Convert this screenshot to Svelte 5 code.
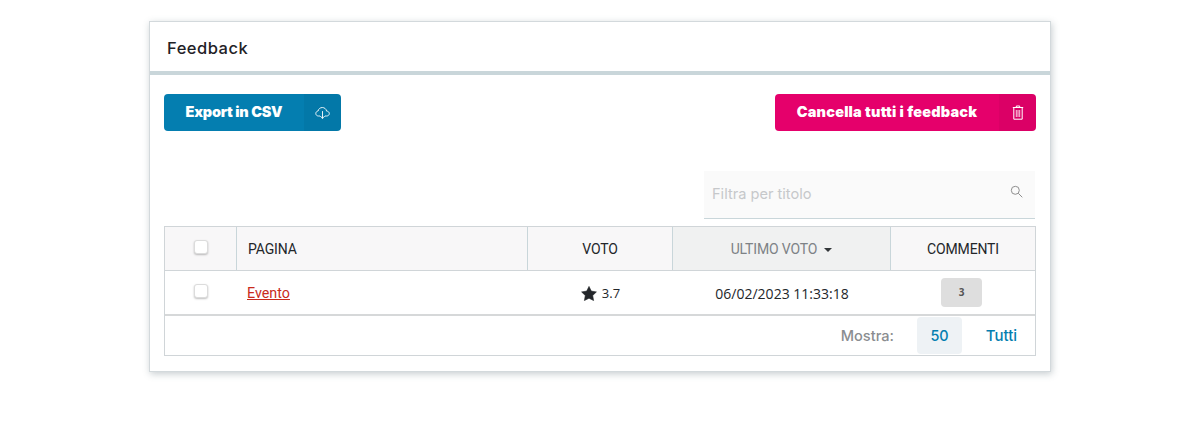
<script>
  const columns = [
    { label: 'PAGINA', cls: 'pagina' },
    { label: 'VOTO', cls: 'voto' }
  ];
</script>

<div class="page">
  <section class="card">
    <header class="card-head"><h2>Feedback</h2></header>
    <div class="card-body">
      <div class="actions">
        <button class="btn blue">
          <span class="btn-label">Export in CSV</span>
          <span class="btn-icon">
            <svg width="15" height="13" viewBox="0 0 15 13" fill="none" stroke="#fff" stroke-width="0.9" stroke-linecap="round" stroke-linejoin="round">
              <path d="M4.6 10H3.4C1.9 10 .8 8.9.8 7.5c0-1.300 1-2.400 2.300-2.500C3.400 3 5.200 1.500 7.300 1.500c2.200 0 4 1.600 4.300 3.600 1.500 0 2.700 1.100 2.700 2.500S13.100 10 11.700 10h-1.300"/>
              <path d="M7.500 5.500v6.800M5.500 10.300l2 2 2-2"/>
            </svg>
          </span>
        </button>
        <button class="btn pink">
          <span class="btn-label wide">Cancella tutti i feedback</span>
          <span class="btn-icon">
            <svg width="12" height="15" viewBox="0 0 12 15" fill="none" stroke="#fff" stroke-width="1" stroke-linejoin="round">
              <path d="M.8 2.500h10.400M4.300 2.500V1h3.400v1.500M1.800 2.500v11.700h8.400V2.500"/>
              <path d="M4.300 5v7M6 5v7M7.700 5v7" stroke-width="0.8"/>
            </svg>
          </span>
        </button>
      </div>

      <div class="filter-row">
        <div class="filter">
          <span class="placeholder">Filtra per titolo</span>
          <svg width="13" height="13" viewBox="0 0 13 13" fill="none" stroke="#8e8e8e" stroke-width="1">
            <circle cx="5.300" cy="5.300" r="4"/>
            <path d="M8.300 8.300l4 4"/>
          </svg>
        </div>
      </div>

      <div class="table">
        <div class="row head">
          <div class="cell check"><span class="box"></span></div>
          {#each columns as c}
            <div class="cell {c.cls}">{c.label}</div>
          {/each}
          <div class="cell ultimo sorted">ULTIMO VOTO <span class="caret"></span></div>
          <div class="cell commenti">COMMENTI</div>
        </div>
        <div class="row data">
          <div class="cell check"><span class="box"></span></div>
          <div class="cell pagina"><a href="#evento">Evento</a></div>
          <div class="cell voto">
            <svg class="star" width="16" height="15" viewBox="0 0 16 15" fill="#23262a">
              <path d="M8 .4l2.300 4.700 5.100.8-3.700 3.600.9 5.100L8 12.200l-4.600 2.400.9-5.100L.6 5.900l5.100-.8z" stroke="#23262a" stroke-width="0.6" stroke-linejoin="round"/>
            </svg>
            <span>3.7</span>
          </div>
          <div class="cell ultimo">06/02/2023 11:33:18</div>
          <div class="cell commenti"><span class="badge">3</span></div>
        </div>
        <div class="foot">
          <span class="mostra">Mostra:</span>
          <span class="page-opt active">50</span>
          <span class="page-opt tutti">Tutti</span>
        </div>
      </div>
    </div>
  </section>
</div>

<style>
  :global(body) {
    margin: 0;
    background: #fff;
  }

  .page {
    width: 1191px;
    height: 428px;
    padding: 21px 0 0 149px;
    box-sizing: border-box;
  }

  .card {
    width: 902px;
    height: 351px;
    box-sizing: border-box;
    border: 1px solid #d3d9dc;
    background: #fff;
    box-shadow: 1px 2px 7px rgba(80, 100, 110, 0.32);
  }

  .card-head {
    border-bottom: 4px solid #c9d6da;
    display: flex;
    align-items: center;
    padding: 2px 17px 0;
    height: 47px;
  }

  h2 {
    margin: 0;
    font: 500 16.500px "Inter", sans-serif;
    letter-spacing: 0.5px;
    color: #1f2226;
  }

  .card-body {
    padding: 19px 14px 0;
  }

  .actions {
    display: flex;
    justify-content: space-between;
    width: 872px;
  }

  .btn {
    display: flex;
    height: 37px;
    padding: 0;
    border: 0;
    border-radius: 4px;
    color: #fff;
    overflow: hidden;
    font: 900 14.500px "Inter", sans-serif;
    letter-spacing: -0.25px;
  }

  .blue {
    width: 177px;
    background: #047eb0;
  }

  .pink {
    width: 261px;
    background: #e5006b;
  }

  .btn-label {
    flex: 1;
    align-self: center;
    text-align: center;
    padding-bottom: 2px;
  }

  .wide {
    letter-spacing: 0.2px;
  }

  .btn-icon {
    width: 37px;
    display: flex;
    align-items: center;
    justify-content: center;
    background: rgba(0, 0, 0, 0.045);
  }

  .filter-row {
    display: flex;
    justify-content: flex-end;
    width: 871px;
    margin-top: 40px;
  }

  .filter {
    width: 331px;
    height: 48px;
    box-sizing: border-box;
    padding: 0 12px 2px 8px;
    background: #fafafa;
    border-bottom: 1px solid #c9d6da;
    display: flex;
    align-items: center;
    justify-content: space-between;
  }

  .filter svg {
    margin-bottom: 4px;
  }

  .placeholder {
    font: 400 14.600px "Inter", sans-serif;
    color: #c6c8ca;
  }

  .table {
    width: 872px;
    box-sizing: border-box;
    margin-top: 7px;
    border: 1px solid #d0d5d8;
    font: 400 14px "Open Sans", sans-serif;
    color: #23262a;
  }

  .row {
    display: grid;
    grid-template-columns: 71px 291px 145px 218px 1fr;
  }

  .cell {
    display: flex;
    align-items: center;
    justify-content: center;
    box-sizing: border-box;
  }

  .head {
    height: 43px;
    background: #f8f7f8;
    border-bottom: 1px solid #d0d5d8;
    font: 400 14px "Roboto", sans-serif;
    letter-spacing: -0.15px;
    color: #23262a;
  }

  .head .cell + .cell {
    border-left: 1px solid #c9d6da;
  }

  .head .sorted {
    background: #f0f1f1;
    color: #7d8286;
  }

  .caret {
    width: 0;
    height: 0;
    margin: 2px 0 0 7px;
    border: 4px solid transparent;
    border-top: 4px solid #33373a;
    border-bottom: 0;
  }

  .pagina {
    justify-content: flex-start;
    padding-left: 11px;
  }

  .box {
    width: 12px;
    height: 12px;
    border: 1px solid #dcdcdc;
    border-radius: 3px;
    background: #fff;
    box-shadow: 0 1px 2px rgba(0, 0, 0, 0.25);
    margin: -4px 0 0 0;
  }

  .data {
    height: 43px;
    border-bottom: 2px solid #d6d8d9;
    font-size: 14px;
  }

  .data .cell {
    padding-top: 1px;
  }

  .data .ultimo {
    padding-left: 2px;
  }

  .voto span {
    font-size: 13px;
  }

  a {
    color: #c92a1b;
    font-family: "Roboto", sans-serif;
    font-size: 14.300px;
  }

  .star {
    margin: 0 5px 0 2px;
  }

  .badge {
    width: 41px;
    height: 29px;
    display: flex;
    align-items: center;
    justify-content: center;
    border-radius: 4px;
    background: #dedede;
    color: #555;
    font-size: 10px;
    font-weight: 700;
    margin: -2px 2px 0 0;
  }

  .foot {
    height: 39px;
    display: flex;
    justify-content: flex-end;
    align-items: center;
    font: 500 14.400px "Inter", sans-serif;
  }

  .mostra {
    color: #8a8d90;
    margin-right: 23px;
    font-size: 14.600px;
  }

  .page-opt {
    height: 37px;
    display: flex;
    align-items: center;
    justify-content: center;
    color: #047eb0;
    width: 45px;
    border-radius: 4px;
  }

  .tutti {
    width: 73px;
    padding-left: 6px;
    box-sizing: border-box;
    font-size: 15px;
  }

  .page-opt.active {
    background: #eef2f5;
  }
</style>
